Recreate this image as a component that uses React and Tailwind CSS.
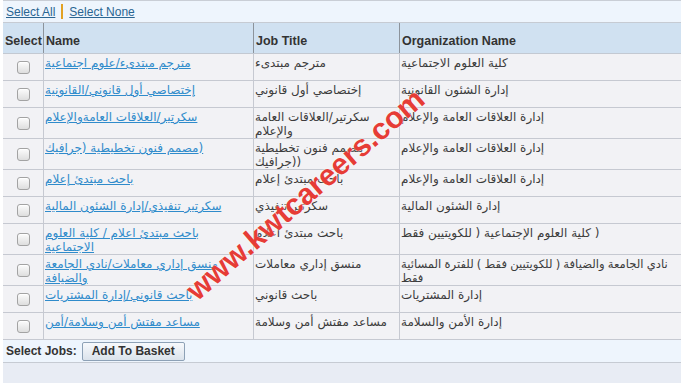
const rows = [
  {
    name: 'مترجم مبتدىء/علوم اجتماعية',
    title: 'مترجم مبتدىء',
    org: 'كلية العلوم الاجتماعية',
  },
  {
    name: 'إختصاصي أول قانوني/القانونية',
    title: 'إختصاصي أول قانوني',
    org: 'إدارة الشئون القانونية',
  },
  {
    name: 'سكرتير/العلاقات العامةوالإعلام',
    title: 'سكرتير/العلاقات العامة والإعلام',
    org: 'إدارة العلاقات العامة والإعلام',
  },
  {
    name: 'مصمم فنون تخطيطية (جرافيك',
    nameTail: ')',
    title: 'مصمم فنون تخطيطية (جرافيك',
    titleTail: ')',
    org: 'إدارة العلاقات العامة والإعلام',
  },
  {
    name: 'باحث مبتدئ إعلام',
    title: 'باحث مبتدئ إعلام',
    org: 'إدارة العلاقات العامة والإعلام',
  },
  {
    name: 'سكرتير تنفيذي/إدارة الشئون المالية',
    title: 'سكرتير تنفيذي',
    org: 'إدارة الشئون المالية',
  },
  {
    name: 'باحث مبتدئ اعلام / كلية العلوم الاجتماعية',
    title: 'باحث مبتدئ اعلام',
    org: 'كلية العلوم الإجتماعية ( للكويتيين فقط ',
    orgTail: ')',
  },
  {
    name: 'منسق إداري معاملات/نادي الجامعة والضيافة',
    title: 'منسق إداري معاملات',
    org: 'نادي الجامعة والضيافة ( للكويتيين فقط ) للفترة المسائية فقط',
    tight: true,
  },
  {
    name: 'باحث قانوني/إدارة المشتريات',
    title: 'باحث قانوني',
    org: 'إدارة المشتريات',
  },
  {
    name: 'مساعد مفتش أمن وسلامة/أمن',
    title: 'مساعد مفتش أمن وسلامة',
    org: 'إدارة الأمن والسلامة',
  },
];

// the closing bracket sits in its own isolate so it does not pair with the opening one
const Tail = ({ ch }) => (ch ? <bdi dir="ltr">{ch}</bdi> : null);

const Checkbox = () => (
  <span className="block w-[13px] h-[13px] rounded-[3px] border border-[#a3a3a3] bg-gradient-to-b from-[#fcfcfc] to-[#dedede] shadow-[inset_0_1px_0_#fff]" />
);

const headCell =
  'flex items-end pb-[2px] px-[2px] font-bold text-[12.5px] text-[#333] border-r border-[#8c939b]';
const bodyCell =
  'min-h-[26px] pt-[2px] px-[1px] leading-[14px] border-r border-[#c6c9d1]';

export default function App() {
  return (
    <div className="relative w-[681px] h-[385px] overflow-hidden bg-white pl-[3px] font-['Liberation_Sans','DejaVu_Sans',sans-serif] text-[12px]">
      <div className="border-t border-[#c9ced6]">
        <div className="h-[22px] flex items-center px-[3px] bg-[#eef5fd] border-b border-[#c6cbd3]">
          <a href="#" className="text-[#2a6592] underline">
            Select All
          </a>
          <span className="mx-[6px] w-[2px] h-[15px] bg-[#e2a224]" />
          <a href="#" className="text-[#2a6592] underline">
            Select None
          </a>
        </div>

        <div className="grid grid-cols-[41px_210px_146px_1fr] h-[31px] bg-[#d0e1f1] border-b border-[#c3c9d2]">
          <div className={headCell}>Select</div>
          <div className={headCell}>Name</div>
          <div className={headCell}>Job Title</div>
          <div className={`${headCell} border-r-0`}>Organization Name</div>
        </div>

        {rows.map((r, i) => (
          <div
            key={i}
            className="grid grid-cols-[41px_210px_146px_1fr] bg-[#f2f2f5] border-b border-[#c6c9d1] text-[#3c3c3c] font-['DejaVu_Sans',sans-serif] text-[12px]"
          >
            <div className="flex items-center justify-center border-r border-[#c6c9d1]">
              <Checkbox />
            </div>
            <div className={`${bodyCell} pr-[14px]`}>
              <a href="#" className="text-[#2f8bcb] underline">
                {r.name}
                <Tail ch={r.nameTail} />
              </a>
            </div>
            <div className={bodyCell}>
              {r.title}
              <Tail ch={r.titleTail} />
            </div>
            <div
              className={`${bodyCell} border-r-0 ${
                r.tight ? 'text-[11.6px] [word-spacing:-0.5px]' : ''
              }`}
            >
              {r.org}
              <Tail ch={r.orgTail} />
            </div>
          </div>
        ))}

        <div className="h-[23px] flex items-center gap-[5px] px-[3px] bg-[#eef5fd] border-b border-[#c6cbd3]">
          <span className="font-bold text-[#333]">Select Jobs:</span>
          <button
            type="button"
            className="h-[19px] w-[103px] rounded-[2px] border border-[#8da1b6] bg-gradient-to-b from-[#f7f9fc] to-[#dbe3ec] font-bold text-[12px] text-[#333] leading-none"
          >
            Add To Basket
          </button>
        </div>
        <div className="h-[20px] bg-[#e8ecf4]" />
      </div>

      <div className="pointer-events-none absolute left-[305px] top-[194px] -translate-x-1/2 -translate-y-1/2 -rotate-[41deg] whitespace-nowrap font-['Liberation_Sans',sans-serif] font-bold text-[30px] text-[#e63c36] [text-shadow:0_0_2px_#fff]">
        www.kwtcareers.com
      </div>
    </div>
  );
}
